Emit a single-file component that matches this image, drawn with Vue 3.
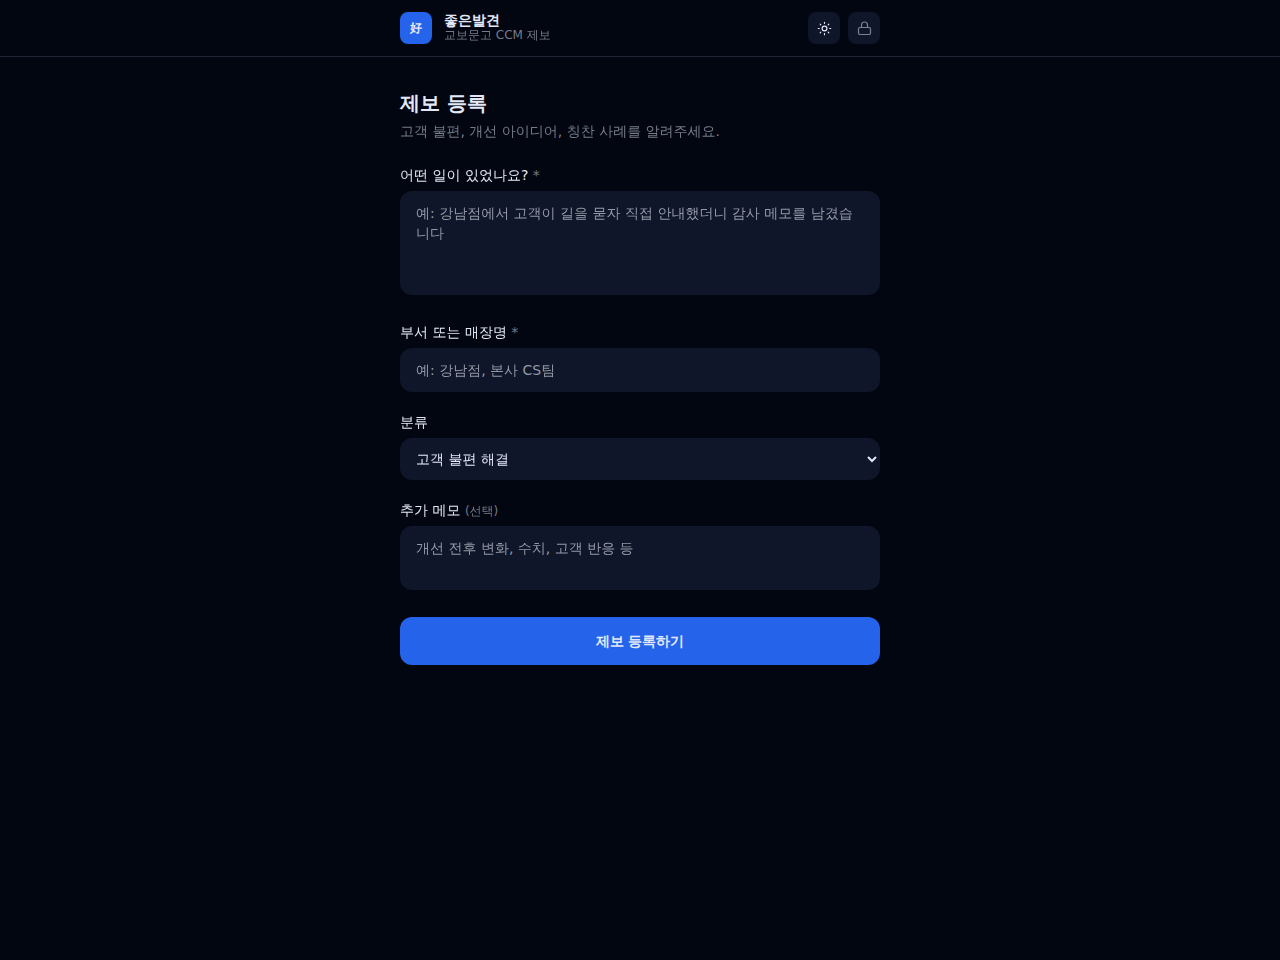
<script setup>
import { ref } from 'vue'

const story = ref('')
const place = ref('')
const category = ref('complaint')
const memo = ref('')
</script>

<template>
  <div class="page">
    <header class="topbar">
      <div class="topbar-inner">
        <div class="logo">好</div>
        <div class="brand">
          <p class="brand-name">좋은발견</p>
          <p class="brand-sub">교보문고 CCM 제보</p>
        </div>
        <button class="icon-btn sun" type="button" aria-label="테마 전환">
          <svg viewBox="0 0 16 16" width="16" height="16" fill="none" stroke="currentColor" stroke-width="1.2" stroke-linecap="round">
            <circle cx="8.5" cy="8.5" r="2.4" />
            <path d="M8.5 2.3v1M8.5 13.7v1M2.3 8.5h1M13.7 8.5h1M4.2 4.2l.6.6M12.2 12.2l.6.6M4.8 12.2l-.6.6M12.8 4.2l-.6.6" />
          </svg>
        </button>
        <button class="icon-btn" type="button" aria-label="관리자">
          <svg viewBox="0 0 16 16" width="16" height="16" fill="none" stroke="currentColor" stroke-width="1.2" stroke-linecap="round" stroke-linejoin="round">
            <rect x="2.5" y="7.5" width="12" height="7" rx="1.4" />
            <path d="M5.5 7.5V5a3 3 0 0 1 6 0v2.5" />
          </svg>
        </button>
      </div>
    </header>

    <main class="content">
      <h1>제보 등록</h1>
      <p class="lead">고객 불편, 개선 아이디어, 칭찬 사례를 알려주세요.</p>

      <form class="form" @submit.prevent>
        <div class="field">
          <label for="story">어떤 일이 있었나요? <span class="mark">*</span></label>
          <textarea id="story" v-model="story" class="control story" placeholder="예: 강남점에서 고객이 길을 묻자 직접 안내했더니 감사 메모를 남겼습니다"></textarea>
        </div>
        <div class="field">
          <label for="place">부서 또는 매장명 <span class="mark">*</span></label>
          <input id="place" v-model="place" class="control" type="text" placeholder="예: 강남점, 본사 CS팀" />
        </div>
        <div class="field">
          <label for="category">분류</label>
          <select id="category" v-model="category" class="control">
            <option value="complaint">고객 불편 해결</option>
            <option value="idea">개선 아이디어</option>
            <option value="praise">칭찬 사례</option>
          </select>
        </div>
        <div class="field">
          <label for="memo">추가 메모 <span class="optional">(선택)</span></label>
          <textarea id="memo" v-model="memo" class="control memo" placeholder="개선 전후 변화, 수치, 고객 반응 등"></textarea>
        </div>
        <button class="submit" type="submit">제보 등록하기</button>
      </form>
    </main>
  </div>
</template>

<style>
html {
  color-scheme: dark;
}

body {
  margin: 0;
  background: #020610;
}
</style>

<style scoped>
* {
  box-sizing: border-box;
}

.page {
  min-height: 100vh;
  background: #020610;
  color: #e2e8f8;
  font-family: "DejaVu Sans", "WenQuanYi Zen Hei", "Noto Sans Mono CJK KR", "Noto Sans CJK KR", sans-serif;
  font-size: 14px;
  line-height: 20px;
}

p,
h1 {
  margin: 0;
}

.topbar {
  border-bottom: 1px solid #1e2638;
}

.topbar-inner {
  display: flex;
  align-items: center;
  gap: 8px;
  max-width: 512px;
  margin: 0 auto;
  padding: 12px 16px;
}

.logo {
  display: flex;
  align-items: center;
  justify-content: center;
  width: 32px;
  height: 32px;
  margin-right: 4px;
  border-radius: 8px;
  background: #2563eb;
  font-size: 12px;
}

.logo,
.brand-name,
h1,
.submit {
  color: #e2e8f8;
  font-family: "DejaVu Sans", sans-serif;
  font-weight: 700;
}

.brand {
  flex: 1;
}

.brand-name {
  line-height: 14px;
}

.brand-sub {
  color: #757b8b;
  font-size: 12px;
  line-height: 16px;
}

.icon-btn {
  display: flex;
  align-items: center;
  justify-content: center;
  width: 32px;
  height: 32px;
  padding: 0;
  border: 0;
  border-radius: 8px;
  background: #0f1629;
  color: #7b8190;
}

.icon-btn.sun {
  color: #e2e8f8;
}

.content {
  max-width: 512px;
  margin: 0 auto;
  padding: 32px 16px;
}

h1 {
  font-size: 20px;
  line-height: 28px;
}

.lead {
  margin-top: 4px;
  color: #757b8b;
}

.form {
  display: flex;
  flex-direction: column;
  gap: 20px;
  margin-top: 24px;
}

.field {
  display: flex;
  flex-direction: column;
  gap: 6px;
}

label {
  height: 20px;
}

.mark {
  color: #757b8b;
}

.optional {
  color: #757b8b;
  font-size: 12px;
}

.control {
  display: block;
  width: 100%;
  padding: 12px 16px;
  border: 0;
  border-radius: 12px;
  background: #0f1629;
  color: #e2e8f8;
  font: inherit;
  resize: none;
}

input.control {
  height: 44px;
}

select.control {
  height: 42px;
  padding: 0 12px;
}

.control::placeholder {
  color: #9298a5;
}

.story {
  height: 104px;
  margin-bottom: 7px;
}

.memo {
  height: 64px;
  margin-bottom: 7px;
}

.submit {
  height: 48px;
  padding: 0;
  border: 0;
  border-radius: 12px;
  background: #2563eb;
  font-size: 14px;
  line-height: 20px;
}
</style>
